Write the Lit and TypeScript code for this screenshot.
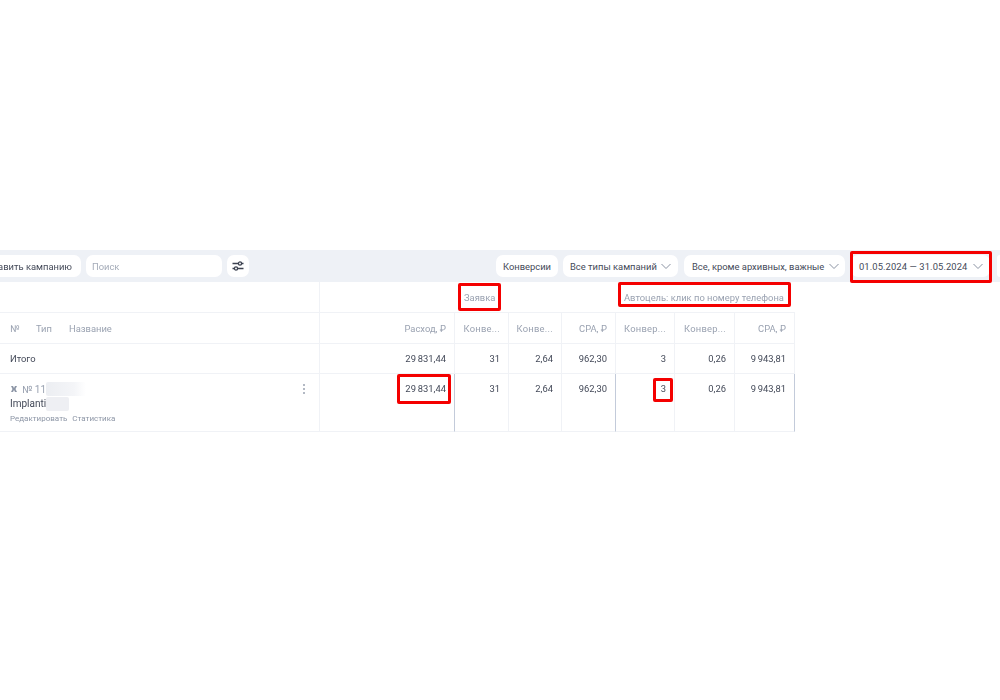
import { LitElement, html, css } from "lit";
import { customElement } from "lit/decorators.js";

const chevron = html`<svg class="chev" width="12" height="8" viewBox="0 0 12 8" fill="none" stroke="#8b93a3" stroke-width="1"><path d="M1.500 2 6 6.500 10.500 2"/></svg>`;

@customElement("app-root")
export class AppRoot extends LitElement {
  static styles = css`
    :host { display: block; width: 1000px; height: 700px; background: #fff; overflow: hidden; position: relative;
      font-family: Roboto, "Noto Sans", sans-serif; font-size: 9.4px; color: #434958; }
    .page { padding-top: 250px; filter: blur(0.35px); }
    .toolbar { height: 32px; background: #eef1f6; display: flex; align-items: center; }
    .btn { height: 22px; background: #fff; border-radius: 7px; display: flex; align-items: center; padding: 0 7px; white-space: nowrap; flex: none; box-sizing: border-box; }
    .chev { flex: none; }
    .add { margin-left: -30px; width: 111px; justify-content: flex-end; padding-right: 9px; }
    .search { margin-left: 5px; width: 136px; color: #a4abb8; padding-left: 6px; }
    .tune { margin-left: 5px; width: 22px; padding: 0; justify-content: center; }
    .spacer { flex: 1; }
    .conv { width: 62px; justify-content: center; padding: 0; }
    .types { margin-left: 5px; width: 115px; justify-content: space-between; padding-right: 6px; }
    .status { margin-left: 6px; width: 161px; justify-content: space-between; padding: 0 5px 0 8px; }
    .date { margin-left: 6px; width: 139px; justify-content: space-between; padding: 0 6px 0 8px; letter-spacing: 0.1px; }
    .stub { margin-left: 7px; width: 3px; padding: 0; border-radius: 7px 0 0 7px; }

    .grid { width: 795px; display: grid; grid-template-columns: 320px 135px 54px 53px 54px 59px 60px 60px; grid-template-rows: 31px 31px 30px 58px; }
    .c { box-sizing: border-box; border-bottom: 1px solid #f0f2f6; border-right: 1px solid #f0f2f6; padding: 0 8px 0 0; display: flex; align-items: center; justify-content: flex-end; white-space: nowrap; }
    .head { color: #9aa2b1; }
    .wide { letter-spacing: 0.25px; }
    .left { justify-content: flex-start; padding-left: 10px; }
    .blank { border-right: none; }
    .group { grid-column: span 3; justify-content: flex-start; padding-left: 9px; color: #9aa2b1; border-right: none; }
    .group2 { padding-left: 8px; }
    .names span:nth-child(1) { width: 26px; }
    .names span:nth-child(2) { width: 33px; }
    .top { align-items: flex-start; padding-top: 9px; }
    .sep { border-right: 1px solid #c3cbda; }
    .main { display: block; padding: 0 0 0 10px; position: relative; }
    .line1 { display: flex; align-items: center; gap: 4px; color: #9aa2b1; height: 14px; margin-top: 8px; font-size: 10px; }
    .line2 { height: 14px; margin-top: 1px; line-height: 14px; display: flex; font-size: 10px; }
    .line3 { display: flex; gap: 5px; color: #8d96a6; font-size: 8px; height: 14px; line-height: 14px; margin-top: 1px; }
    .blur { display: inline-block; background: linear-gradient(90deg, #eceef2, #f4f5f8 70%, #fff); height: 14px; border-radius: 2px; }
    .b1 { width: 40px; margin-left: -4px; }
    .b2 { width: 23px; background: #eeeff3; }
    .dots { position: absolute; right: 14px; top: 10px; display: grid; gap: 2px; }
    .dots i { width: 2px; height: 2px; border-radius: 50%; background: #9aa2b1; display: block; }

    .mark { position: absolute; box-sizing: border-box; border: 3px solid #f40000; border-radius: 2px; }
    .m1 { left: 850px; top: 251px; width: 142px; height: 32px; }
    .m2 { left: 458px; top: 283px; width: 43px; height: 28px; }
    .m3 { left: 618px; top: 282px; width: 173px; height: 25px; }
    .m4 { left: 397px; top: 374px; width: 54px; height: 30px; }
    .m5 { left: 653px; top: 378px; width: 20px; height: 24px; }
  `;

  render() {
    return html`
      <div class="page">
        <div class="toolbar">
          <div class="btn add">Добавить кампанию</div>
          <div class="btn search">Поиск</div>
          <div class="btn tune">
            <svg width="14" height="14" viewBox="0 0 14 14" fill="none" stroke="#3c4250" stroke-width="1.300">
              <path d="M1.500 4.500h11M1.500 9.500h11"/><circle cx="9" cy="4.500" r="1.600" fill="#fff"/><circle cx="5" cy="9.500" r="1.600" fill="#fff"/>
            </svg>
          </div>
          <div class="spacer"></div>
          <div class="btn conv">Конверсии</div>
          <div class="btn types">Все типы кампаний ${chevron}</div>
          <div class="btn status">Все, кроме архивных, важные ${chevron}</div>
          <div class="btn date">01.05.2024 — 31.05.2024 ${chevron}</div>
          <div class="btn stub"></div>
        </div>
        <div class="grid">
          <div class="c"></div><div class="c blank"></div>
          <div class="c group">Заявка</div>
          <div class="c group group2">Автоцель: клик по номеру телефона</div>

          <div class="c left head names"><span>№</span><span>Тип</span><span>Название</span></div>
          <div class="c head">Расход, ₽</div>
          <div class="c head wide">Конве...</div><div class="c head wide">Конве...</div><div class="c head">CPA, ₽</div>
          <div class="c head wide">Конвер...</div><div class="c head wide">Конвер...</div><div class="c head">CPA, ₽</div>

          <div class="c left">Итого</div>
          <div class="c">29\u2009831,44</div><div class="c">31</div><div class="c">2,64</div><div class="c">962,30</div>
          <div class="c">3</div><div class="c">0,26</div><div class="c">9\u2009943,81</div>

          <div class="c main">
            <div class="line1">
              <svg width="8" height="8" viewBox="0 0 8 8" fill="#8d96a6"><path d="M1 1h2l1 2 1-2h2L5.500 4 7 7H5L4 5 3 7H1l1.500-3z"/></svg>
              <span>№ 11</span><span class="blur b1"></span>
            </div>
            <div class="line2"><span>Implanti</span><span class="blur b2"></span></div>
            <div class="line3"><span>Редактировать</span><span>Статистика</span></div>
            <div class="dots"><i></i><i></i><i></i></div>
          </div>
          <div class="c top sep">29\u2009831,44</div>
          <div class="c top">31</div><div class="c top">2,64</div><div class="c top sep">962,30</div>
          <div class="c top">3</div><div class="c top">0,26</div><div class="c top sep">9\u2009943,81</div>
        </div>
      </div>
      <div class="mark m1"></div>
      <div class="mark m2"></div>
      <div class="mark m3"></div>
      <div class="mark m4"></div>
      <div class="mark m5"></div>
    `;
  }
}
